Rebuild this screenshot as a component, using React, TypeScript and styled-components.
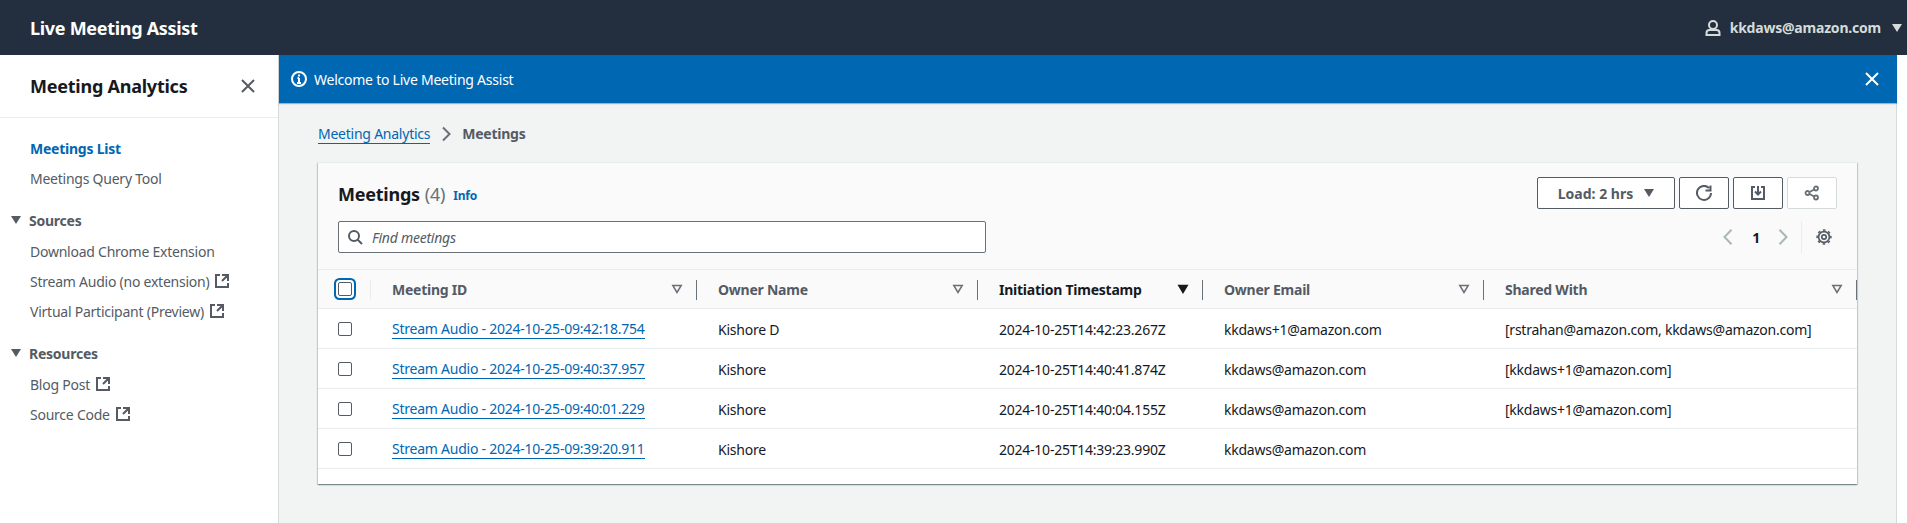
import React from "react";
import styled, { createGlobalStyle } from "styled-components";

const blue = "#0067b3";

const GlobalStyle = createGlobalStyle`
  html, body {
    margin: 0;
    padding: 0;
    background: #fff;
  }
  * {
    box-sizing: border-box;
  }
  body {
    font-family: "Noto Sans", "Open Sans", sans-serif;
    font-size: 14px;
    letter-spacing: -0.24px;
    color: #16191f;
  }
`;

type IconProps = { size?: number; color?: string; width?: number };

const IconSvg = styled.svg`
  display: block;
  flex-shrink: 0;
`;

const Svg = ({ size = 16, color = "currentColor", width = 2, children }: IconProps & { children: React.ReactNode }) => (
  <IconSvg width={size} height={size} viewBox="0 0 16 16" fill="none" stroke={color} strokeWidth={width}>
    {children}
  </IconSvg>
);

const CloseIcon = (p: IconProps) => (
  <Svg {...p}>
    <path d="M2 2l12 12M14 2L2 14" />
  </Svg>
);
const ExternalIcon = (p: IconProps) => (
  <Svg {...p}>
    <path d="M14 8.010v-6H8M14 2L8 8M6 2H2v12h12v-4" />
  </Svg>
);
const InfoIcon = (p: IconProps) => (
  <Svg {...p}>
    <circle cx="8" cy="8" r="7" />
    <path d="M8 11.500V7M6 12h4M6.500 7H8M8 3.500v2" />
  </Svg>
);
const SearchIcon = (p: IconProps) => (
  <Svg {...p}>
    <circle cx="7" cy="7" r="5" />
    <path d="M15 15l-4.500-4.500" />
  </Svg>
);
const UserIcon = (p: IconProps) => (
  <Svg {...p}>
    <circle cx="8" cy="5" r="4" />
    <path d="M1.500 15v-2c0-1.700 1.300-3 3-3h7c1.700 0 3 1.300 3 3v2z" />
  </Svg>
);
const RefreshIcon = (p: IconProps) => (
  <Svg {...p}>
    <path d="M15 8a7 7 0 1 1-2-5M14.500 .5v5h-5" />
  </Svg>
);
const DownloadIcon = (p: IconProps) => (
  <Svg {...p}>
    <path d="M5 2H2v12h12V2h-3M8 1v8.500M5 6.500l3 3 3-3" />
  </Svg>
);
const ShareIcon = (p: IconProps) => (
  <Svg {...p}>
    <circle cx="12" cy="3.500" r="2" />
    <circle cx="12" cy="12.500" r="2" />
    <circle cx="3.500" cy="8" r="2" />
    <path d="M5.500 7l4.700-2.500M5.500 9l4.700 2.500" />
  </Svg>
);
const ChevronLeft = (p: IconProps) => (
  <Svg {...p}>
    <path d="M11.500 .8L4.500 8l7 7.200" />
  </Svg>
);
const ChevronRight = (p: IconProps) => (
  <Svg {...p}>
    <path d="M4.500 .8l7 7.200-7 7.200" />
  </Svg>
);
const BreadcrumbArrow = (p: IconProps) => (
  <Svg {...p}>
    <path d="M5 1.500L11.500 8 5 14.500" />
  </Svg>
);
const GearIcon = (p: IconProps) => (
  <Svg {...p}>
    <circle cx="8" cy="8" r="2.200" strokeWidth="1.700" />
    <circle cx="8" cy="8" r="5.400" strokeWidth="1.700" />
    <circle cx="8" cy="8" r="6.900" strokeWidth="1.500" strokeDasharray="2.700 2.720" strokeDashoffset="1.350" />
  </Svg>
);

const Caret = styled.span<{ $color?: string }>`
  display: inline-block;
  width: 0;
  height: 0;
  border-left: 5px solid transparent;
  border-right: 5px solid transparent;
  border-top: 8px solid ${(p) => p.$color ?? "#545b64"};
  flex-shrink: 0;
`;

const SortIcon = ({ active }: { active?: boolean }) => (
  <IconSvg width="12" height="12" viewBox="0 0 12 12">
    <path d="M1.800 2.500h8.400L6 9.500z" fill={active ? "#16191f" : "none"} stroke={active ? "#16191f" : "#687078"} strokeWidth="1.500" />
  </IconSvg>
);

const Page = styled.div`
  width: 1907px;
  height: 523px;
  overflow: hidden;
  display: flex;
  flex-direction: column;
`;

const TopBar = styled.header`
  height: 55px;
  flex-shrink: 0;
  background: #232f3e;
  display: flex;
  align-items: center;
  justify-content: space-between;
  padding: 0 5px 0 30px;
`;

const Brand = styled.div`
  color: #fff;
  font-size: 18px;
  font-weight: 700;
  letter-spacing: -0.3px;
`;

const UserMenu = styled.div`
  display: flex;
  align-items: center;
  color: #d5dbdb;
  font-size: 14px;
  font-weight: 700;
  letter-spacing: -0.21px;
`;

const UserName = styled.span`
  margin: 0 11px 0 9px;
`;

const Body = styled.div`
  flex: 1;
  display: flex;
  min-height: 0;
`;

const Side = styled.nav`
  width: 279px;
  flex-shrink: 0;
  border-right: 1px solid #d5dbdb;
  background: #fff;
`;

const SideHead = styled.div`
  height: 63px;
  display: flex;
  align-items: center;
  justify-content: space-between;
  padding: 0 22px 0 30px;
  border-bottom: 1px solid #eaeded;
  font-size: 18px;
  font-weight: 700;
`;

const SideClose = styled.span`
  color: #545b64;
  display: block;
`;

const SideBody = styled.div`
  padding-top: 15px;
`;

const SideLink = styled.div<{ $active?: boolean }>`
  height: 30px;
  display: flex;
  align-items: center;
  gap: 5px;
  padding-left: 30px;
  color: ${(p) => (p.$active ? blue : "#545b64")};
  font-weight: ${(p) => (p.$active ? 700 : 400)};
`;

const SideSection = styled.div`
  height: 30px;
  margin: 12px 0 1px;
  display: flex;
  align-items: center;
  gap: 8px;
  padding-left: 11px;
  color: #545b64;
  font-weight: 700;
`;

const Main = styled.main`
  width: 1618px;
  flex-shrink: 0;
  background: #f2f3f3;
  border-right: 1px solid #d5dbdb;
`;

const Flash = styled.div`
  height: 48px;
  background: ${blue};
  color: #fff;
  display: flex;
  align-items: center;
  padding: 0 17px 0 12px;
  margin-right: -1px;
  box-shadow: 0 1px 1px rgba(0, 28, 36, 0.3);
`;

const FlashText = styled.span`
  margin-left: 7px;
  flex: 1;
`;

const Crumbs = styled.div`
  height: 59px;
  display: flex;
  align-items: center;
  padding: 2px 0 0 39px;
  color: #687078;
`;

const CrumbLink = styled.span`
  color: ${blue};
  border-bottom: 1px solid ${blue};
  line-height: 19px;
`;

const CrumbArrow = styled.span`
  margin: 0 8px;
  color: #687078;
`;

const CrumbCurrent = styled.span`
  color: #545b64;
  font-weight: 700;
`;

const Card = styled.section`
  width: 1539px;
  margin-left: 39px;
  height: 322px;
  background: #fff;
  box-shadow: 0 1px 1px 0 rgba(0, 28, 36, 0.3), 1px 1px 1px 0 rgba(0, 28, 36, 0.15), -1px 1px 1px 0 rgba(0, 28, 36, 0.15);
  border-top: 1px solid #eaeded;
`;

const CardHead = styled.div`
  height: 107px;
  background: #fafafa;
  border-bottom: 1px solid #eaeded;
  padding: 14px 20px 0 20px;
  display: grid;
  grid-template-columns: 1fr auto;
  grid-template-rows: 32px 32px;
  row-gap: 12px;
`;

const TitleRow = styled.div`
  display: flex;
  align-items: center;
  padding-top: 1px;
`;

const Title = styled.h2`
  margin: 0;
  font-size: 18px;
  font-weight: 700;
  color: #16191f;
`;

const Count = styled.span`
  margin-left: 5px;
  font-size: 18px;
  color: #687078;
`;

const InfoLink = styled.span`
  margin: 3px 0 0 8px;
  color: ${blue};
  font-size: 12px;
  font-weight: 700;
`;

const Actions = styled.div`
  display: flex;
  gap: 4px;
`;

const Button = styled.div<{ $wide?: boolean; $disabled?: boolean }>`
  width: ${(p) => (p.$wide ? "138px" : "50px")};
  height: 32px;
  display: flex;
  align-items: center;
  justify-content: center;
  gap: 11px;
  background: #fff;
  border: 1px solid ${(p) => (p.$disabled ? "#d5dbdb" : "#545b64")};
  border-radius: 2px;
  color: ${(p) => (p.$disabled ? "#687078" : "#545b64")};
  font-weight: 700;
  letter-spacing: 0;
`;

const Search = styled.div`
  width: 648px;
  height: 32px;
  display: flex;
  align-items: center;
  gap: 9px;
  padding-left: 8px;
  background: #fff;
  border: 1px solid #687078;
  border-radius: 2px;
  color: #545b64;
  font-style: italic;
`;

const Pager = styled.div`
  display: flex;
  align-items: center;
  justify-self: end;
  height: 32px;
  color: #aab7b8;
  padding-right: 5px;
`;

const PageNum = styled.span`
  margin: 0 15px 0 16px;
  color: #16191f;
  font-weight: 700;
`;

const PagerSep = styled.span`
  width: 1px;
  height: 32px;
  background: #eaeded;
  margin: 0 14px 0 10px;
`;

const GearWrap = styled.span`
  color: #545b64;
`;

const TableGrid = styled.div`
  display: grid;
  grid-template-columns: 53px 326px 281px 225px 281px 373px;
`;

const HeadCell = styled.div<{ $active?: boolean; $noSep?: boolean }>`
  position: relative;
  height: 39px;
  background: #fafafa;
  border-bottom: 1px solid #eaeded;
  display: flex;
  align-items: center;
  justify-content: space-between;
  padding: 0 14px 0 21px;
  color: ${(p) => (p.$active ? "#16191f" : "#545b64")};
  font-weight: 700;
  &::after {
    content: "";
    position: absolute;
    right: 0;
    top: 10px;
    height: 20px;
    width: 1px;
    background: ${(p) => (p.$noSep ? "#eaeded" : "#687078")};
  }
`;

const CheckHead = styled(HeadCell)`
  padding: 0 0 0 20px;
  justify-content: flex-start;
`;

const BodyCell = styled.div`
  height: 40px;
  border-bottom: 1px solid #eaeded;
  display: flex;
  align-items: center;
  padding: 1px 0 0 21px;
  color: #16191f;
  white-space: nowrap;
`;

const CheckCell = styled(BodyCell)`
  padding-left: 20px;
`;

const Check = styled.span<{ $focus?: boolean }>`
  display: block;
  width: 14px;
  height: 14px;
  border: 1px solid #545b64;
  border-radius: 2px;
  background: #fff;
  ${(p) => p.$focus && `box-shadow: 0 0 0 2px #fff, 0 0 0 4px ${blue};`}
`;

const RowLink = styled.span`
  color: ${blue};
  border-bottom: 1px solid ${blue};
  line-height: 19px;
`;

const columns = [
  { label: "Meeting ID" },
  { label: "Owner Name" },
  { label: "Initiation Timestamp", active: true },
  { label: "Owner Email" },
  { label: "Shared With" },
];

const rows = [
  ["Stream Audio - 2024-10-25-09:42:18.754", "Kishore D", "2024-10-25T14:42:23.267Z", "kkdaws+1@amazon.com", "[rstrahan@amazon.com, kkdaws@amazon.com]"],
  ["Stream Audio - 2024-10-25-09:40:37.957", "Kishore", "2024-10-25T14:40:41.874Z", "kkdaws@amazon.com", "[kkdaws+1@amazon.com]"],
  ["Stream Audio - 2024-10-25-09:40:01.229", "Kishore", "2024-10-25T14:40:04.155Z", "kkdaws@amazon.com", "[kkdaws+1@amazon.com]"],
  ["Stream Audio - 2024-10-25-09:39:20.911", "Kishore", "2024-10-25T14:39:23.990Z", "kkdaws@amazon.com", ""],
];

const App = () => {
  return (
    <Page>
      <GlobalStyle />
      <TopBar>
        <Brand>Live Meeting Assist</Brand>
        <UserMenu>
          <UserIcon color="#d5dbdb" size={16} />
          <UserName>kkdaws@amazon.com</UserName>
          <Caret $color="#d5dbdb" />
        </UserMenu>
      </TopBar>
      <Body>
        <Side>
          <SideHead>
            Meeting Analytics
            <SideClose>
              <CloseIcon />
            </SideClose>
          </SideHead>
          <SideBody>
            <SideLink $active>Meetings List</SideLink>
            <SideLink>Meetings Query Tool</SideLink>
            <SideSection>
              <Caret />
              Sources
            </SideSection>
            <SideLink>Download Chrome Extension</SideLink>
            <SideLink>
              Stream Audio (no extension) <ExternalIcon size={16} />
            </SideLink>
            <SideLink>
              Virtual Participant (Preview) <ExternalIcon size={16} />
            </SideLink>
            <SideSection>
              <Caret />
              Resources
            </SideSection>
            <SideLink>
              Blog Post <ExternalIcon size={16} />
            </SideLink>
            <SideLink>
              Source Code <ExternalIcon size={16} />
            </SideLink>
          </SideBody>
        </Side>
        <Main>
          <Flash>
            <InfoIcon />
            <FlashText>Welcome to Live Meeting Assist</FlashText>
            <CloseIcon />
          </Flash>
          <Crumbs>
            <CrumbLink>Meeting Analytics</CrumbLink>
            <CrumbArrow>
              <BreadcrumbArrow />
            </CrumbArrow>
            <CrumbCurrent>Meetings</CrumbCurrent>
          </Crumbs>
          <Card>
            <CardHead>
              <TitleRow>
                <Title>Meetings</Title>
                <Count>(4)</Count>
                <InfoLink>Info</InfoLink>
              </TitleRow>
              <Actions>
                <Button $wide>
                  Load: 2 hrs
                  <Caret />
                </Button>
                <Button>
                  <RefreshIcon />
                </Button>
                <Button>
                  <DownloadIcon />
                </Button>
                <Button $disabled>
                  <ShareIcon width={1.8} />
                </Button>
              </Actions>
              <Search>
                <SearchIcon color="#545b64" />
                Find meetings
              </Search>
              <Pager>
                <ChevronLeft />
                <PageNum>1</PageNum>
                <ChevronRight />
                <PagerSep />
                <GearWrap>
                  <GearIcon />
                </GearWrap>
              </Pager>
            </CardHead>
            <TableGrid>
              <CheckHead $noSep>
                <Check $focus />
              </CheckHead>
              {columns.map((c) => (
                <HeadCell key={c.label} $active={c.active}>
                  {c.label}
                  <SortIcon active={c.active} />
                </HeadCell>
              ))}
              {rows.map((r) => (
                <React.Fragment key={r[0]}>
                  <CheckCell>
                    <Check />
                  </CheckCell>
                  <BodyCell>
                    <RowLink>{r[0]}</RowLink>
                  </BodyCell>
                  {r.slice(1).map((v, i) => (
                    <BodyCell key={i}>{v}</BodyCell>
                  ))}
                </React.Fragment>
              ))}
            </TableGrid>
          </Card>
        </Main>
      </Body>
    </Page>
  );
};

export default App;
